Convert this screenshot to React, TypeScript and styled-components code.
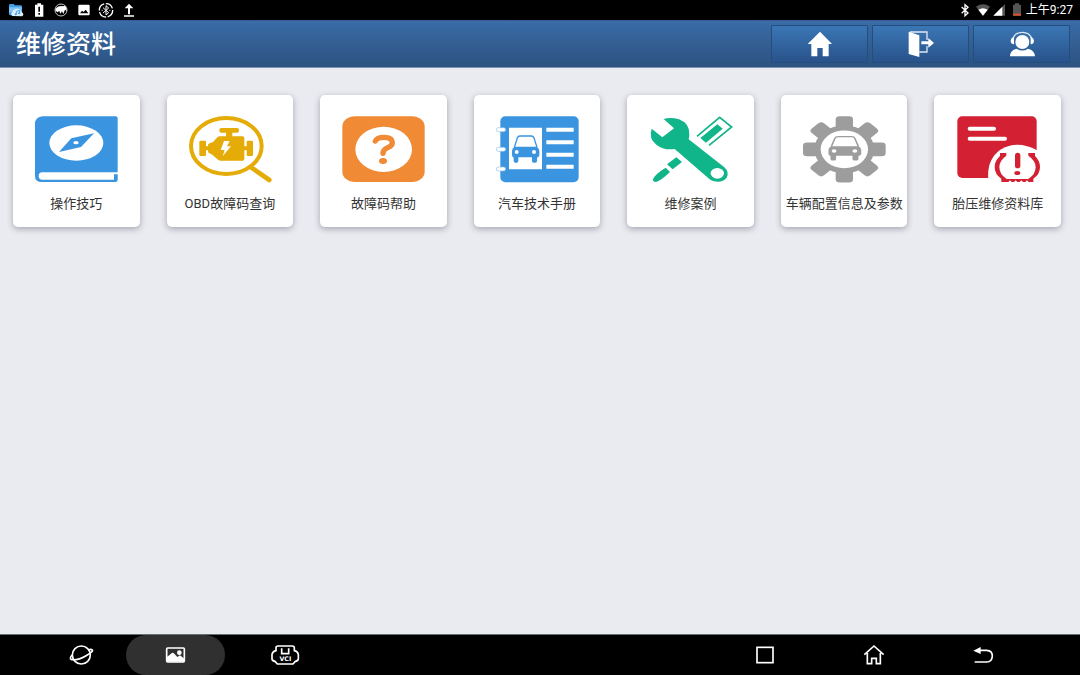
import React from "react";
import styled, { createGlobalStyle } from "styled-components";

const GlobalStyle = createGlobalStyle`
  * { box-sizing: border-box; }
  body {
    margin: 0;
    background: #eaebf0;
    font-family: Roboto, "Noto Sans CJK SC", sans-serif;
  }
`;

const Screen = styled.div`
  display: flex;
  flex-direction: column;
  min-height: 100vh;
`;

const StatusBar = styled.div`
  display: flex;
  justify-content: space-between;
  height: 20px;
  padding: 0 7px 0 8px;
  background: #000;
  color: #fff;
`;

const Notifications = styled.div`
  display: flex;
  justify-content: space-between;
  width: 129px;
`;

const SystemStatus = styled.div`
  display: flex;
  align-items: center;
  gap: 2px;
`;

const Clock = styled.span`
  font-size: 12px;
  line-height: 20px;
`;

const Header = styled.header`
  display: flex;
  align-items: center;
  justify-content: space-between;
  height: 48px;
  padding: 0 10px 0 16px;
  border-top: 1px solid #3a5a96;
  border-bottom: 1px solid #7d93b4;
  background: linear-gradient(#3a6ca6, #2d5281);
`;

const Title = styled.h1`
  margin: 0;
  padding-top: 2px;
  color: #fff;
  font-size: 25px;
  line-height: 44px;
  font-weight: 500;
`;

const Actions = styled.div`
  display: flex;
  gap: 4px;
`;

const ActionButton = styled.button`
  display: flex;
  align-items: center;
  justify-content: center;
  width: 97px;
  height: 38px;
  padding: 0;
  border: 1px solid #234f80;
  border-radius: 1px;
  background: linear-gradient(#3b77b5, #29528a);
`;

const Grid = styled.main`
  flex: 1;
  display: grid;
  grid-template-columns: repeat(7, 1fr);
  align-content: start;
  gap: 27px;
  padding: 27px 19px 27px 13px;
`;

const Card = styled.button`
  display: flex;
  flex-direction: column;
  align-items: center;
  min-width: 0;
  padding: 20px 0 13px;
  border: 0;
  border-radius: 5px;
  background: #fff;
  box-shadow: 0 2px 6px rgba(50, 50, 70, 0.38);
  font-family: inherit;
`;

const CardLabel = styled.span`
  margin-top: 9px;
  color: #333;
  font-size: 13px;
  line-height: 20px;
  white-space: nowrap;
`;

const NavBar = styled.nav`
  display: flex;
  justify-content: space-between;
  height: 41px;
  padding: 0 43px 0 36px;
  border-top: 1px solid #66716f;
  background: #000;
`;

const NavGroup = styled.div`
  display: flex;
`;

const NavButton = styled.button<{ $width: number; $active?: boolean }>`
  display: flex;
  align-items: center;
  justify-content: center;
  width: ${(p) => p.$width}px;
  padding: 0;
  border: 0;
  border-radius: 20px;
  background: ${(p) => (p.$active ? "#303030" : "transparent")};
`;

type GlyphProps = { x: number; children: React.ReactNode };

const StatusGlyph = ({ x, children }: GlyphProps) => (
  <svg width="16" height="20" viewBox={`${x} 0 48 60`} fill="#fff" aria-hidden="true">{children}</svg>
);

const ActionGlyph = ({ x, children }: GlyphProps) => (
  <svg width="30" height="30" viewBox={`${x} 86 90 90`} fill="#fff" aria-hidden="true">{children}</svg>
);

const CardGlyph = ({ x, children }: GlyphProps) => (
  <svg width="90" height="70" viewBox={`${x} 90 270 210`} aria-hidden="true">{children}</svg>
);

const NavGlyph = ({ x, children }: GlyphProps) => (
  <svg width="30" height="30" viewBox={`${x} 35 90 90`} fill="none" stroke="#fff" strokeWidth="5" aria-hidden="true">{children}</svg>
);

const Car = ({ color }: { color: string }) => (
  <g>
    <path d="M154 187 163 159Q165 153 171 153H205Q211 153 213 159L222 187" fill="none" stroke={color} strokeWidth="4" />
    <path d="M147 200Q147 188 156 185H220Q229 188 229 200V211Q228 216 222 218V228Q222 233 217 233H212Q207 233 207 228V217H166V228Q166 233 161 233H157Q152 233 152 228V218Q148 216 147 211Z" fill={color} />
    <circle cx="161" cy="201" r="6" fill="#fff" />
    <circle cx="213" cy="201" r="6" fill="#fff" />
  </g>
);

const cards = [
  {
    label: "操作技巧",
    icon: (
      <CardGlyph x={94}>
        <path d="M130 94H348Q354 94 354 100V284Q354 291 347 291H126Q106 291 106 272V112Q110 95 130 94Z" fill="#3a94df" />
        <path d="M128 262H355V268H343V284H128Q117 284 117 273Q117 262 128 262Z" fill="#fff" />
        <ellipse cx="230" cy="174" rx="81" ry="53" fill="#fff" />
        <path d="M283 145 215 160 178 201 244 186Z" fill="#3a94df" />
        <ellipse cx="229" cy="173" rx="8" ry="5" fill="#fff" />
      </CardGlyph>
    ),
  },
  {
    label: "OBD故障码查询",
    icon: (
      <CardGlyph x={90}>
        <g fill="#e5ab06">
          <ellipse cx="214" cy="183" rx="106" ry="84" fill="none" stroke="#e5ab06" strokeWidth="12" />
          <path d="M288 247 343 285" stroke="#e5ab06" strokeWidth="14" strokeLinecap="round" />
          <rect x="133" y="167" width="20" height="46" rx="4" />
          <rect x="275" y="167" width="19" height="46" rx="4" />
          <rect x="193" y="129" width="59" height="14" rx="6" />
          <path d="M213 140H232V156H213ZM150 184H162V196H150ZM264 184H278V196H264Z" />
          <path d="M159 181Q159 176 164 175L175 170 187 157Q190 154 194 154H263Q268 154 268 159V222Q268 227 263 227H197Q193 227 190 225L172 209 163 205Q159 203 159 199Z" />
        </g>
        <path d="M207 168H224L216 184H228L203 214 209 195H197Z" fill="#fff" />
      </CardGlyph>
    ),
  },
  {
    label: "故障码帮助",
    icon: (
      <CardGlyph x={85}>
        <rect x="98" y="94" width="247" height="197" rx="38" ry="31" fill="#f08a35" />
        <ellipse cx="222" cy="193" rx="85" ry="68" fill="#fff" />
        <path d="M197 168Q202 157 223 157Q248 157 248 173Q248 182 234 188Q220 194 220 205" fill="none" stroke="#f08a35" strokeWidth="16" strokeLinecap="round" />
        <ellipse cx="220" cy="228" rx="12" ry="9" fill="#f08a35" />
      </CardGlyph>
    ),
  },
  {
    label: "汽车技术手册",
    icon: (
      <CardGlyph x={87}>
        <rect x="112" y="94" width="235" height="198" rx="15" fill="#3a94df" />
        <g fill="#fff" stroke="#8cc0ec" strokeWidth="2">
          <rect x="100" y="128" width="28" height="12" rx="6" />
          <rect x="100" y="187" width="28" height="12" rx="6" />
          <rect x="100" y="246" width="28" height="12" rx="6" />
        </g>
        <path d="M138 128H237V253H138ZM250 128H332V140H250ZM250 166H332V178H250ZM250 203H332V215H250ZM250 239H332V251H250Z" fill="#fff" />
        <Car color="#3a94df" />
      </CardGlyph>
    ),
  },
  {
    label: "维修案例",
    icon: (
      <CardGlyph x={86}>
        <g fill="#10b58a">
          <path d="M139 102Q160 96 185 103Q217 115 216 148Q216 157 214 163L321 247Q337 262 328 278Q316 294 290 289Q283 288 277 283L172 192Q140 197 117 179Q93 160 103 131L135 157 170 130Z" />
          <path d="M239 154 307 97 343 126 275 181" fill="none" stroke="#10b58a" strokeWidth="5" />
          <path d="M249 159 300 118 316 131 266 173ZM149 238 177 217 194 231 166 253Z" />
          <path d="M107 283Q112 268 145 248L158 261Q132 286 116 291Q106 291 107 283Z" />
        </g>
        <ellipse cx="300" cy="265" rx="20" ry="16" fill="#fff" />
      </CardGlyph>
    ),
  },
  {
    label: "车辆配置信息及参数",
    icon: (
      <CardGlyph x={87}>
        <g transform="translate(223 193) scale(1 .8)" fill="#9d9d9d">
          {[0, 45, 90, 135].map((angle) => (
            <rect key={angle} x="-26" y="-124" width="52" height="248" rx="12" transform={`rotate(${angle})`} />
          ))}
          <circle r="90" />
          <circle r="71" fill="#fff" />
        </g>
        <g transform="translate(-1 17) scale(1.2 .9)">
          <Car color="#9d9d9d" />
        </g>
      </CardGlyph>
    ),
  },
  {
    label: "胎压维修资料库",
    icon: (
      <CardGlyph x={83}>
        <rect x="96" y="94" width="238" height="185" rx="15" fill="#d32033" />
        <path d="M133 131H206M133 161H239" stroke="#fff" strokeWidth="12" strokeLinecap="round" />
        <path d="M189 281Q184 224 225 194Q276 164 335 196V281Z" fill="#fff" />
        <path d="M224 204H243V212Q222 227 222 246Q222 268 244 282H309Q331 268 331 246Q331 227 309 212V204H329V213Q344 227 344 246Q344 268 324 281V291H310L305 286 300 291H293L288 286 283 291H276L271 286 266 291H259L254 286 249 291H228V281Q208 268 208 246Q208 227 224 213Z" fill="#d32033" />
        <path d="M277 211V242" stroke="#d32033" strokeWidth="16" strokeLinecap="round" />
        <ellipse cx="276" cy="264" rx="9" ry="6" fill="#d32033" />
      </CardGlyph>
    ),
  },
];

export default function App() {
  return (
    <Screen>
      <GlobalStyle />
      <StatusBar>
        <Notifications>
          <StatusGlyph x={24}>
            <path d="M27 16Q27 12 31 12H41L45 16H62Q66 16 66 20V46H31Q27 46 27 42Z" fill="#3f9fe9" />
            <path d="M27 22H66V28L27 38Z" fill="#7cc4f7" />
            <path d="M37 48Q30 42 37 36Q40 27 51 26Q63 26 65 36Q74 42 67 49Z" fill="#dceefb" />
            <path d="M49 43V34L59 31V40" fill="none" stroke="#3f9fe9" strokeWidth="3" />
            <circle cx="47" cy="43" r="3" fill="#3f9fe9" />
            <circle cx="57" cy="40" r="3" fill="#3f9fe9" />
          </StatusGlyph>
          <StatusGlyph x={92}>
            <path fillRule="evenodd" d="M111 10H122V14H129V50H104V14H111ZM114 20V35H119V20ZM114 39V44H119V39Z" />
          </StatusGlyph>
          <StatusGlyph x={160}>
            <circle cx="184" cy="30" r="18" fill="none" stroke="#ccc" strokeWidth="3" />
            <path d="M167 31Q168 22 178 19L197 18Q202 25 201 33L196 29 191 42 187 34 182 41 179 33 173 37Z" />
          </StatusGlyph>
          <StatusGlyph x={227}>
            <path fillRule="evenodd" d="M237 14H265Q268 14 268 17V43Q268 46 265 46H237Q234 46 234 43V17Q234 14 237 14ZM239 40H264L256 29 250 36 245 32Z" />
          </StatusGlyph>
          <StatusGlyph x={295}>
            <circle cx="319" cy="31" r="20" fill="none" stroke="#fff" strokeWidth="4" strokeDasharray="26 5" />
            <path d="M310 23 327 38 319 45V17L327 24 310 39M306 31H309M329 31H332" fill="none" stroke="#fff" strokeWidth="3" />
          </StatusGlyph>
          <StatusGlyph x={363}>
            <path d="M387 11 400 25H390V43H384V25H374ZM372 46H402V50H372Z" />
          </StatusGlyph>
        </Notifications>
        <SystemStatus>
          <StatusGlyph x={592}>
            <path d="M606 21 625 39 616 47V14L625 22 606 40" fill="none" stroke="#fff" strokeWidth="4" />
          </StatusGlyph>
          <StatusGlyph x={647}>
            <path d="M650 20Q671 6 692 20L671 47Z" fill="#555" />
            <path d="M657 29Q671 20 685 29L671 47Z" />
          </StatusGlyph>
          <svg width="13" height="20" viewBox="698 0 39 60" aria-hidden="true">
            <path d="M734 12V47H699Z" fill="#555" />
            <path d="M726 20V47H699Z" fill="#fff" />
          </svg>
          <StatusGlyph x={741}>
            <path d="M762 10H774V14H780V47H756V14H762Z" fill="#555" />
            <path d="M756 41H780V47H756Z" fill="#e2502b" />
          </StatusGlyph>
          <Clock>上午9:27</Clock>
        </SystemStatus>
      </StatusBar>

      <Header>
        <Title>维修资料</Title>
        <Actions>
          <ActionButton aria-label="主页">
            <ActionGlyph x={131}>
              <path d="M176 94 212 131H202V168H184V143H168V168H150V131H139Z" />
            </ActionGlyph>
          </ActionButton>
          <ActionButton aria-label="退出">
            <ActionGlyph x={434}>
              <path d="M446 95H497V119M497 137V155H474" fill="none" stroke="#dbe7f3" strokeWidth="4" />
              <path d="M442 94 474 105V170L442 161ZM480 123H501V113L518 128 501 142V132H480Z" />
            </ActionGlyph>
          </ActionButton>
          <ActionButton aria-label="客服">
            <ActionGlyph x={738}>
              <path d="M756 116Q761 96 784 96Q807 96 812 116" fill="none" stroke="#dbe7f3" strokeWidth="4" />
              <circle cx="784" cy="125" r="21" />
              <path d="M759 110V132Q750 132 749 122Q750 112 759 110ZM809 110V132Q818 132 819 122Q818 112 809 110ZM747 168Q747 150 767 145Q784 156 801 145Q821 150 822 168Z" />
            </ActionGlyph>
          </ActionButton>
        </Actions>
      </Header>

      <Grid>
        {cards.map((card) => (
          <Card key={card.label}>
            {card.icon}
            <CardLabel>{card.label}</CardLabel>
          </Card>
        ))}
      </Grid>

      <NavBar>
        <NavGroup>
          <NavButton $width={90} aria-label="浏览器">
            <NavGlyph x={49}>
              <circle cx="95" cy="80" r="27" />
              <path d="M67 80Q58 91 66 94Q86 96 108 83Q132 69 128 65Q124 61 117 65" />
            </NavGlyph>
          </NavButton>
          <NavButton $width={99} $active aria-label="图片">
            <NavGlyph x={333}>
              <rect x="350" y="59" width="53" height="42" rx="3" />
              <circle cx="388" cy="73" r="7" fill="#fff" stroke="none" />
              <path d="M350 100V87L363 76Q368 71 373 76L382 86 390 81 403 91V100Z" fill="#fff" stroke="none" />
            </NavGlyph>
          </NavButton>
          <NavButton $width={120} aria-label="VCI">
            <NavGlyph x={660}>
              <path d="M684 53H727Q733 53 733 59V67Q743 69 745 78V92Q744 98 736 99L729 107H682L675 99Q667 98 666 92V78Q668 69 678 67V59Q678 53 684 53Z" />
              <path d="M695 60V76H716V60" />
              <text x="706" y="97" textAnchor="middle" fontFamily="DejaVu Sans, sans-serif" fontSize="19" fontWeight="700" fill="#fff" stroke="none">VCI</text>
            </NavGlyph>
          </NavButton>
        </NavGroup>
        <NavGroup>
          <NavButton $width={109} aria-label="最近任务">
            <NavGlyph x={30}>
              <rect x="51" y="57" width="48" height="46" />
            </NavGlyph>
          </NavButton>
          <NavButton $width={109} aria-label="主屏幕">
            <NavGlyph x={357}>
              <path d="M373 79 402 53 431 79M382 74V106H395V90H409V106H421V74" />
            </NavGlyph>
          </NavButton>
          <NavButton $width={109} aria-label="返回">
            <NavGlyph x={684}>
              <path d="M700 67 722 56V77Z" fill="#fff" stroke="none" />
              <path d="M716 66H740Q757 67 757 83Q756 101 740 101H704" />
            </NavGlyph>
          </NavButton>
        </NavGroup>
      </NavBar>
    </Screen>
  );
}
